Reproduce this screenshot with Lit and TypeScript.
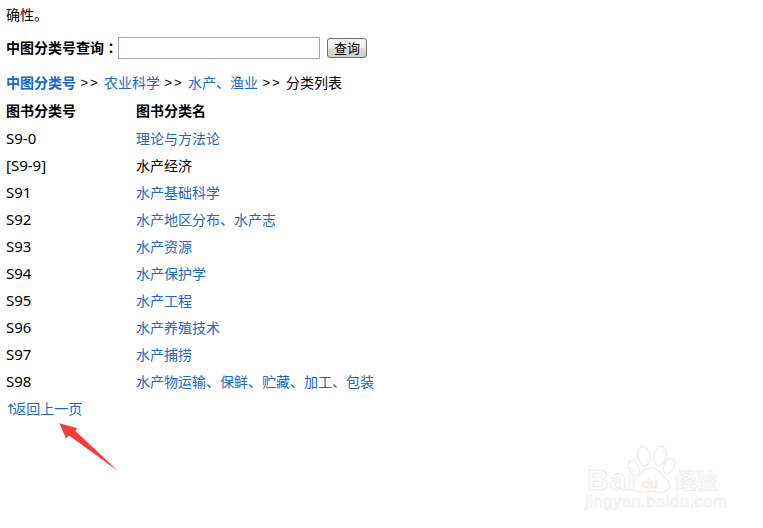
import { LitElement, html, css, svg } from "lit";
import { customElement } from "lit/decorators.js";

const rows: [string, string, boolean][] = [
  ["S9-0", "理论与方法论", true],
  ["[S9-9]", "水产经济", false],
  ["S91", "水产基础科学", true],
  ["S92", "水产地区分布、水产志", true],
  ["S93", "水产资源", true],
  ["S94", "水产保护学", true],
  ["S95", "水产工程", true],
  ["S96", "水产养殖技术", true],
  ["S97", "水产捕捞", true],
  ["S98", "水产物运输、保鲜、贮藏、加工、包装", true],
];

@customElement("app-root")
export class AppRoot extends LitElement {
  static styles = css`
    :host {
      display: block;
      position: relative;
      height: 528px;
      overflow: hidden;
      background: #fff;
      color: #000;
      font-family: "Noto Sans", "Noto Sans CJK SC", sans-serif;
      font-size: 14px;
      line-height: 27px;
    }
    .page { display: flex; flex-direction: column; padding: 1px 0 0 6px; }
    .intro { height: 27px; }
    .search { display: flex; align-items: center; height: 27px; margin-top: 6px; }
    .search b { font-weight: 700; }
    .colon { font-family: "Noto Sans CJK TC", sans-serif; }
    .input { width: 200px; height: 20px; border: 1px solid #aaa; background: #fff; box-sizing: content-box; }
    .btn {
      width: 40px; height: 20px; margin-left: 7px; box-sizing: border-box;
      border: 1px solid #707070; border-radius: 3px;
      background: linear-gradient(#f2f2f2 0 45%, #dcdcdc 55%, #cfcfcf);
      font: 13px/18px "Noto Sans CJK SC", sans-serif;
      padding: 0; color: #000;
    }
    .crumb { display: flex; height: 28px; margin-top: 8px; }
    .sep { width: 28px; text-align: center; letter-spacing: 2px; font-size: 13px; font-family: "Liberation Sans", sans-serif; }
    a { color: #1a69c8; text-decoration: none; }
    a.first { font-weight: 700; color: #1466c8; }
    .row { display: grid; grid-template-columns: 130px 1fr; height: 27px; }
    .head { font-weight: 700; height: 28px; }
    .code { font-size: 15px; }
    .up { font-family: "DejaVu Sans", sans-serif; margin-left: -1px; letter-spacing: -4.4px; }
    .mark { position: absolute; left: 0; top: 0; width: 763px; height: 528px; pointer-events: none; }
    .wm-logo { font: 700 30px "Liberation Sans", sans-serif; fill: #fff; stroke: #eee; stroke-width: 1; letter-spacing: 1px; }
    .wm-cn { font: 700 21px "Noto Sans CJK SC", sans-serif; fill: #fff; stroke: #eee; stroke-width: .8; }
    .wm-url { font: 16.5px "Liberation Sans", sans-serif; fill: #fff; stroke: #eee; stroke-width: .7; letter-spacing: .55px; }
    .wm-du { font: 700 13px "Liberation Sans", sans-serif; fill: #fff; stroke: #e6e6e6; stroke-width: .7; }
    .paw { fill: #fff; stroke: #eee; stroke-width: 1.2; }
  `;

  render() {
    return html`
      <div class="page">
        <div class="intro">确性。</div>
        <div class="search">
          <b>中图分类号查询<span class="colon">：</span></b><span class="input"></span><button class="btn">查询</button>
        </div>
        <div class="crumb"><a class="first" href="#">中图分类号</a><span class="sep">&gt;&gt;</span><a href="#">农业科学</a><span class="sep">&gt;&gt;</span><a href="#">水产、渔业</a><span class="sep">&gt;&gt;</span><span>分类列表</span></div>
        <div class="row head"><span>图书分类号</span><span>图书分类名</span></div>
        ${rows.map(
          ([code, name, link]) => html`<div class="row"><span class="code">${code}</span>${link ? html`<a href="#">${name}</a>` : html`<span>${name}</span>`}</div>`
        )}
        <div class="row"><a href="#"><span class="up">↑</span>返回上一页</a></div>
      </div>
      <svg class="mark" viewBox="0 0 763 528">
        ${svg`
          <path d="M59.3 423.3 L77 428 L75.5 431 L118 471 L69 435.5 L66 438.5 Z" fill="#f93c3c"/>
          <ellipse class="paw" cx="644" cy="456" rx="6" ry="10" transform="rotate(-8 644 456)"/>
          <ellipse class="paw" cx="660" cy="456" rx="6" ry="10" transform="rotate(10 660 456)"/>
          <ellipse class="paw" cx="634" cy="468" rx="5" ry="8" transform="rotate(-25 634 468)"/>
          <ellipse class="paw" cx="669" cy="466" rx="5" ry="8" transform="rotate(25 669 466)"/>
          <path class="paw" d="M651 468 C643 468 640 475 636 479 C628 486 635 494 644 492 C649 491 653 491 658 492 C668 494 674 486 666 479 C660 474 659 468 651 468 Z"/>
          <text class="wm-du" x="642" y="488">du</text>
          <text class="wm-logo" x="587" y="490">Bai</text>
          <text class="wm-cn" x="675" y="488">经验</text>
          <text class="wm-url" x="585" y="507">jingyan.baidu.com</text>
        `}
      </svg>
    `;
  }
}
